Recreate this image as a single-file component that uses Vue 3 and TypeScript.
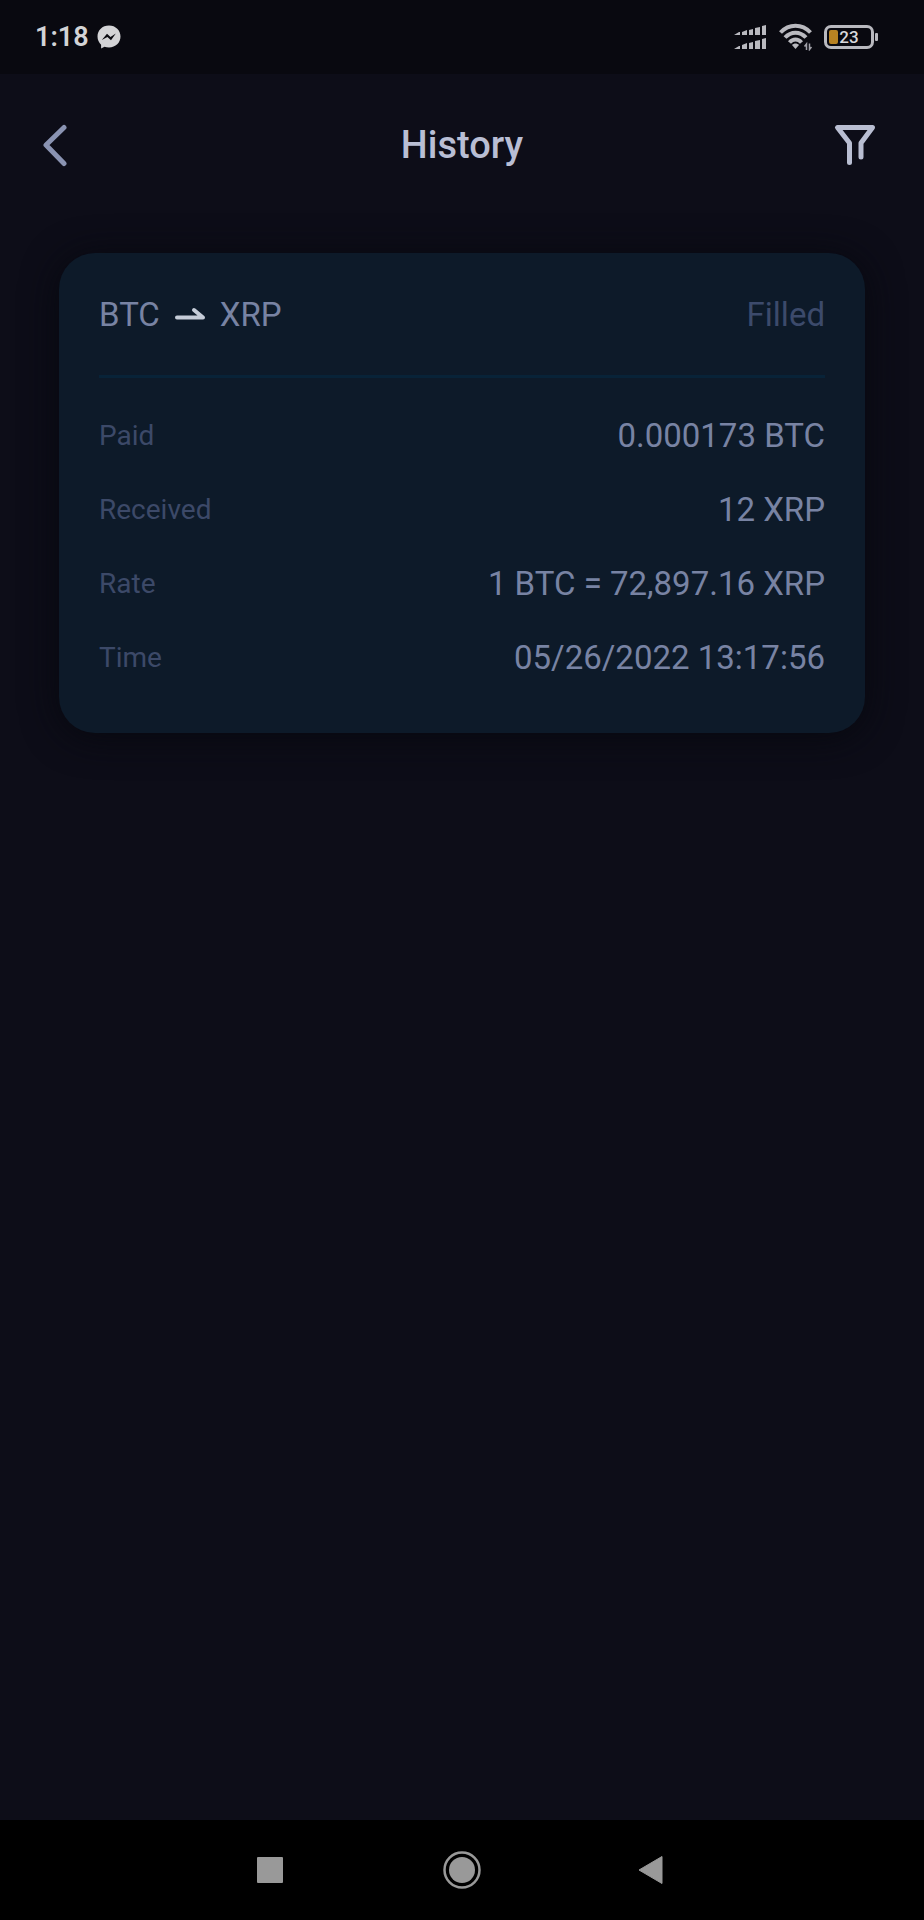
<script setup lang="ts">
interface Detail {
  label: string
  value: string
}

const details: Detail[] = [
  { label: 'Paid', value: '0.000173 BTC' },
  { label: 'Received', value: '12 XRP' },
  { label: 'Rate', value: '1 BTC = 72,897.16 XRP' },
  { label: 'Time', value: '05/26/2022 13:17:56' },
]
</script>

<template>
  <div class="screen">
    <div class="status-bar">
      <div class="status-left">
        <span class="clock">1:18</span>
        <svg class="messenger" viewBox="0 0 24 24" aria-hidden="true">
          <path
            fill="#d3d3d6"
            d="M12 0.5C5.3 0.5 0.5 5.3 0.5 11.6c0 3.3 1.4 6.2 3.6 8.2v3.7l3.4-1.8c1.4.5 2.9.8 4.5.8 6.7 0 11.5-4.7 11.5-10.9S18.7.5 12 .5z"
          />
          <path fill="#090910" d="M4.8 15 10 8.8l3.5 3.3L18.800 8.600 14 15.200l-3.600-3.300z" />
        </svg>
      </div>
      <div class="status-right">
        <svg class="signal" viewBox="0 0 34 26" fill="#b9b9bf" aria-hidden="true">
          <path d="M0 11l5-3h1v3zM8 8l5-2v5H8zM15 6l4-1v6h-4zM21 4l5-1v8h-5zM28 2l4-1v10h-4z" />
          <path d="M0 25l5-3h1v3zM8 21l5-2v6H8zM15 19l4-1v7h-4zM21 17l5-1v9h-5zM28 15l4-1v11h-4z" />
        </svg>
        <svg class="wifi" viewBox="0 0 34 28" aria-hidden="true">
          <g fill="none" stroke="#b9b9bf" stroke-width="4">
            <path d="M1.500 9.500C10 .500 23 .500 31.500 9.500" />
            <path d="M6 14.500c6-6.500 15-6.500 21 0" />
            <path d="M10.500 19.500c3.500-4 8.500-4 12 0" />
          </g>
          <path fill="#b9b9bf" d="M13 22c2-2 5-2 7 0l-3.500 4z" />
          <path fill="none" stroke="#a0a0a8" stroke-width="1.500" d="M27.500 27v-6l-2 2.500M30.500 20.500v6l2-2.500" />
        </svg>
        <div class="battery">
          <div class="battery-body">
            <span class="battery-fill"></span>
            <span class="battery-text">23</span>
          </div>
          <span class="battery-tip"></span>
        </div>
      </div>
    </div>

    <header class="app-bar">
      <button class="icon-button" type="button" aria-label="Back">
        <svg class="app-icon" viewBox="0 0 44 44" aria-hidden="true">
          <path
            d="M31 4.500 13 22l18 18.500"
            fill="none"
            stroke="#8a93b2"
            stroke-width="5"
            stroke-linecap="round"
            stroke-linejoin="round"
          />
        </svg>
      </button>
      <h1>History</h1>
      <button class="icon-button filter" type="button" aria-label="Filter">
        <svg class="app-icon" viewBox="0 0 44 44" aria-hidden="true">
          <path
            d="M16.500 39.500V20L4.500 4.500h35L28 20v14"
            fill="none"
            stroke="#b9bed2"
            stroke-width="5"
            stroke-linecap="round"
            stroke-linejoin="round"
          />
        </svg>
      </button>
    </header>

    <main>
      <article class="card">
        <div class="card-head">
          <h2 class="pair">
            <span>BTC</span>
            <svg class="arrow" viewBox="0 0 32 20" role="img" aria-label="to">
              <path
                d="M3 12.500h26L20 5"
                fill="none"
                stroke="#c5ccd8"
                stroke-width="4"
                stroke-linecap="round"
                stroke-linejoin="round"
              />
            </svg>
            <span>XRP</span>
          </h2>
          <span class="state">Filled</span>
        </div>
        <dl class="details">
          <div v-for="item in details" :key="item.label" class="detail">
            <dt>{{ item.label }}</dt>
            <dd>{{ item.value }}</dd>
          </div>
        </dl>
      </article>
    </main>

    <nav class="system-nav" aria-label="System">
      <button type="button" aria-label="Recent apps">
        <svg viewBox="0 0 40 40" aria-hidden="true">
          <rect x="5" y="7" width="26" height="26" rx="1" fill="#999" />
        </svg>
      </button>
      <button type="button" aria-label="Home">
        <svg viewBox="0 0 40 40" aria-hidden="true">
          <circle cx="20" cy="20" r="17.500" fill="none" stroke="#999" stroke-width="2.500" />
          <circle cx="20" cy="20" r="13" fill="#999" />
        </svg>
      </button>
      <button type="button" aria-label="Back">
        <svg viewBox="0 0 40 40" aria-hidden="true">
          <path d="M7 20 30 6.500v27z" fill="#999" stroke="#999" stroke-linejoin="round" />
        </svg>
      </button>
    </nav>
  </div>
</template>

<style>
body {
  margin: 0;
  background: #0d0d18;
}
</style>

<style scoped>
.screen {
  display: flex;
  flex-direction: column;
  min-height: 100vh;
  background: #0d0d18;
  font-family: Roboto, 'Liberation Sans', sans-serif;
}

button {
  display: flex;
  align-items: center;
  justify-content: center;
  padding: 0;
  border: 0;
  background: none;
  cursor: pointer;
}

.status-bar {
  display: flex;
  align-items: center;
  justify-content: space-between;
  height: 74px;
  padding: 0 46px 0 35px;
  background: #090910;
}

.status-left,
.status-right {
  display: flex;
  align-items: center;
}

.status-left {
  gap: 8px;
}

.status-right {
  gap: 11px;
}

.clock {
  color: #d3d3d6;
  font-size: 27px;
  font-weight: 600;
  line-height: 32px;
}

.messenger {
  width: 24px;
  height: 24px;
}

.signal {
  width: 34px;
  height: 26px;
}

.wifi {
  width: 34px;
  height: 28px;
}

.battery {
  display: flex;
  align-items: center;
  gap: 1px;
}

.battery-body {
  position: relative;
  box-sizing: border-box;
  width: 50px;
  height: 24px;
  border: 3px solid #b9b9bf;
  border-radius: 7px;
}

.battery-fill {
  position: absolute;
  top: 2px;
  bottom: 2px;
  left: 2px;
  width: 9px;
  border-radius: 2px;
  background: #b88222;
}

.battery-text {
  position: relative;
  display: block;
  color: #d8d8dc;
  font-size: 17px;
  font-weight: 500;
  line-height: 18px;
  text-align: center;
}

.battery-tip {
  width: 3px;
  height: 8px;
  border-radius: 1px;
  background: #b9b9bf;
}

.app-bar {
  display: grid;
  grid-template-columns: 1fr auto 1fr;
  align-items: center;
  height: 142px;
  padding: 0 33px;
}

.icon-button {
  width: 44px;
  height: 44px;
}

.filter {
  justify-self: end;
  margin-right: 14px;
}

.app-icon {
  width: 44px;
  height: 44px;
}

h1 {
  margin: 0;
  color: #b9bed4;
  font-size: 38px;
  font-weight: 500;
  line-height: 44px;
}

main {
  flex: 1;
  padding: 37px 59px;
}

.card {
  padding: 40px 40px 55px;
  border-radius: 36px;
  background: #0d1a29;
  box-shadow: 0 4px 36px #07080f;
}

.card-head {
  display: flex;
  align-items: center;
  justify-content: space-between;
  padding-bottom: 38px;
  border-bottom: 3px solid #082338;
}

.pair {
  display: flex;
  align-items: center;
  gap: 14px;
  margin: 0;
  color: #7883a3;
  font-size: 33px;
  font-weight: 400;
  line-height: 44px;
}

.arrow {
  width: 32px;
  height: 20px;
}

.state {
  color: #3c4a6b;
  font-size: 33px;
  line-height: 44px;
}

.details {
  display: flex;
  flex-direction: column;
  gap: 34px;
  margin: 38px 0 0;
}

.detail {
  display: flex;
  align-items: center;
  justify-content: space-between;
  line-height: 40px;
}

dt {
  color: #3c4968;
  font-size: 28px;
}

dd {
  margin: 0;
  color: #7883a3;
  font-size: 33px;
}

.system-nav {
  display: flex;
  align-items: center;
  justify-content: center;
  gap: 130px;
  height: 100px;
  background: #000;
}

.system-nav button {
  width: 60px;
  height: 60px;
}

.system-nav svg {
  width: 40px;
  height: 40px;
}
</style>
